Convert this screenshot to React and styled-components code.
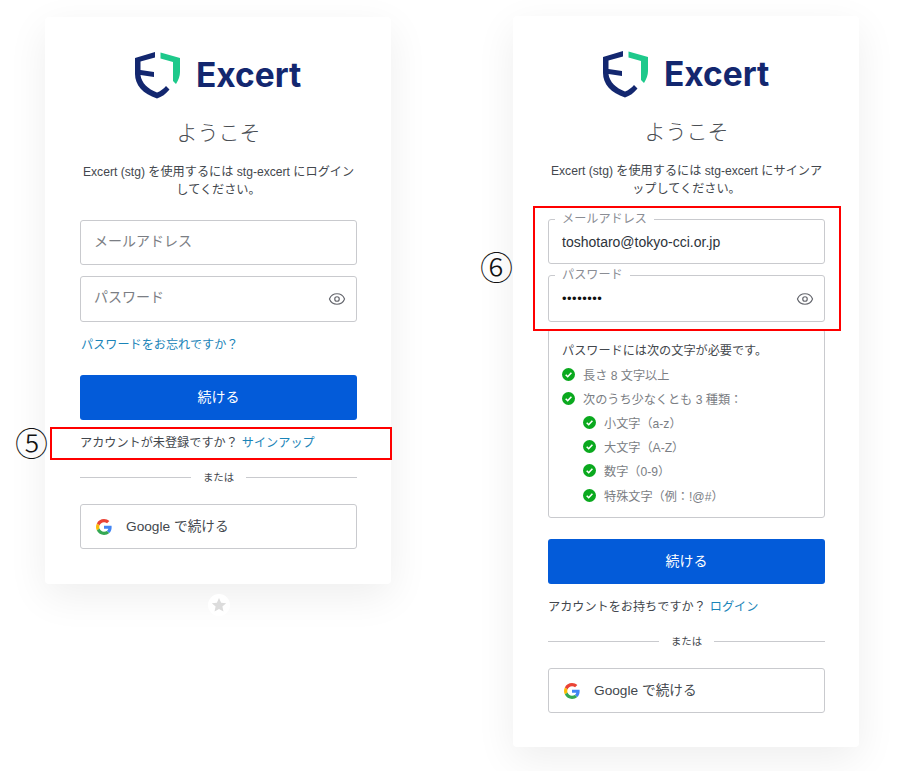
import React from 'react';
import styled, { createGlobalStyle } from 'styled-components';
import { Eye } from 'lucide-react';

const GlobalStyle = createGlobalStyle`
    html, body {
        margin: 0;
        padding: 0;
        background: #fff;
    }

    * {
        box-sizing: border-box;
    }

    body {
        font-family: "Liberation Sans", "Noto Sans CJK JP", sans-serif;
        color: #43474d;
    }
`;

const Page = styled.div`
    width: 903px;
    height: 771px;
    overflow: hidden;
    display: flex;
    align-items: flex-start;
    gap: 122px;
    padding: 16px 0 0 45px;
`;

const Card = styled.section`
    position: relative;
    width: 346px;
    margin-top: ${(p) => p.$offset || 0}px;
    padding: 35px 34px ${(p) => p.$bottom}px 35px;
    background: #fff;
    border-radius: 4px;
    box-shadow: 0 12px 40px rgba(0, 0, 0, 0.07);
`;

const Brand = styled.div`
    display: flex;
    align-items: center;
    height: 46px;
    margin-left: 55px;
    gap: 15px;
`;

const BrandName = styled.span`
    font-family: Inter, "Liberation Sans", sans-serif;
    font-size: 33.5px;
    font-weight: 700;
    line-height: 46px;
    color: #13276f;
`;

const Title = styled.h1`
    margin: ${(p) => p.$top}px 0 0;
    font-size: 21px;
    font-weight: 300;
    line-height: 30px;
    text-align: center;
    color: #4a4e54;
`;

const Intro = styled.p`
    margin: 15px 0 0;
    font-size: 12.15px;
    line-height: 18px;
    text-align: center;
`;

const Field = styled.div`
    position: relative;
    display: flex;
    align-items: center;
    height: ${(p) => p.$height}px;
    margin-top: ${(p) => p.$top}px;
    padding: 0 13px;
    border: 1px solid #c9cace;
    border-radius: 3px;
    font-size: 14px;
    color: #2d333a;
`;

const Placeholder = styled.span`
    margin-top: -6px;
    color: #7b7e84;
`;

const FloatLabel = styled.span`
    position: absolute;
    top: -8px;
    left: 6px;
    padding: 0 7px;
    background: #fff;
    font-size: 12.15px;
    line-height: 14px;
    color: #8a8d94;
`;

const Dots = styled.span`
    font-size: 13px;
    letter-spacing: 0.5px;
    margin-top: -1px;
    color: #111;
`;

const EyeButton = styled.span`
    display: flex;
    margin-left: auto;
    margin-right: -3px;
    color: #65676e;
`;

const TextLink = styled.a`
    color: #1a84b8;
    text-decoration: none;
`;

const ForgotRow = styled.div`
    margin-top: 15px;
    font-size: 12.15px;
    line-height: 16px;
    padding-left: 1px;
`;

const PrimaryButton = styled.button`
    display: block;
    width: 100%;
    height: 45px;
    margin-top: ${(p) => p.$top}px;
    padding: 0 0 3px;
    border: none;
    border-radius: 3px;
    background: #035bd9;
    color: #fff;
    font-family: inherit;
    font-size: 14px;
`;

const AccountRow = styled.p`
    position: relative;
    margin: 15px 0 0;
    font-size: 12.15px;
    line-height: 16px;
    white-space: nowrap;

    a {
        margin-left: 4px;
    }
`;

const RedBox = styled.div`
    position: absolute;
    top: ${(p) => p.$top}px;
    left: ${(p) => p.$left}px;
    width: ${(p) => p.$width}px;
    height: ${(p) => p.$height}px;
    border: 2px solid #ff0000;
    pointer-events: none;
`;

const Marker = styled.span`
    position: absolute;
    top: ${(p) => p.$top}px;
    left: ${(p) => p.$left}px;
    font-family: "Noto Sans CJK JP", sans-serif;
    font-size: 33px;
    font-weight: 300;
    line-height: 36px;
    color: #111;
`;

const Divider = styled.div`
    display: flex;
    align-items: center;
    gap: 12px;
    margin-top: 18px;
    font-size: 10.4px;
    line-height: 16px;

    span {
        transform: translateY(1px);
    }

    &::before,
    &::after {
        content: '';
        flex: 1;
        height: 1px;
        background: #c9cace;
    }
`;

const GoogleButton = styled.button`
    display: flex;
    align-items: center;
    gap: 14px;
    width: 100%;
    height: 45px;
    margin-top: 19px;
    padding: 0 15px;
    background: #fff;
    border: 1px solid #c9cace;
    border-radius: 3px;
    font-family: inherit;
    font-size: 13.7px;
    color: #43474d;

    span {
        margin-top: -4px;
    }
`;

const Requirements = styled.div`
    height: 189px;
    margin-top: 7px;
    padding: 13px 13px 0;
    border: 1px solid #c9cace;
    border-radius: 3px;
`;

const ReqTitle = styled.div`
    font-size: 12.15px;
    line-height: 16px;
    margin-bottom: 3px;
`;

const ReqItem = styled.div`
    display: flex;
    align-items: center;
    gap: 8px;
    height: 24.2px;
    padding-left: ${(p) => (p.$nested ? 21 : 0)}px;
    font-size: 12.15px;
    color: #7b7e84;
`;

const Badge = styled.div`
    position: absolute;
    top: 577px;
    left: 163px;
    width: 22px;
    height: 22px;
    border-radius: 50%;
    background: #fff;
    display: flex;
    align-items: center;
    justify-content: center;
`;

const ShieldLogo = () => (
    <svg width="46" height="47" viewBox="5 4 46 47" aria-hidden="true">
        <path
            fill="#13276f"
            d="M5 10L25 4V9.5L10.5 13.5V22L24 24V29L10.5 27C11.5 35 18 41 27 44.5C30 43.5 34 40.5 36 38L39.5 41.5C36 46 31.5 49 27 50.5C13 46 5 37 5 26Z"
        />
        <path
            fill="#1ec98b"
            d="M30.5 4.5L50 10V24C50 28 48.5 32 46 36L43 33V14L30.5 10.500Z"
        />
    </svg>
);

const GoogleLogo = () => (
    <svg width="16" height="16" viewBox="0 0 48 48" aria-hidden="true">
        <path fill="#EA4335" d="M24 9.5c3.5 0 6.7 1.2 9.2 3.6l6.9-6.9C35.9 2.4 30.5 0 24 0 14.6 0 6.5 5.4 2.6 13.2l8 6.2C12.5 13.7 17.8 9.5 24 9.5z" />
        <path fill="#4285F4" d="M46.9 24.5c0-1.6-.1-3.100-.4-4.500H24v9h12.900c-.6 3-2.200 5.500-4.700 7.200l7.700 6c4.500-4.200 7-10.300 7-17.700z" />
        <path fill="#FBBC05" d="M10.600 28.600c-.5-1.500-.8-3-.8-4.600s.3-3.100.8-4.600l-8-6.200C.9 16.500 0 20.100 0 24s.9 7.500 2.600 10.800l8-6.200z" />
        <path fill="#34A853" d="M24 48c6.500 0 11.900-2.100 15.900-5.800l-7.700-6c-2.200 1.500-4.900 2.300-8.200 2.300-6.200 0-11.500-4.200-13.400-9.900l-8 6.200C6.500 42.600 14.600 48 24 48z" />
    </svg>
);

const CheckIcon = () => (
    <svg width="13" height="13" viewBox="0 0 13 13" aria-hidden="true">
        <circle cx="6.5" cy="6.5" r="6.5" fill="#0aa91e" />
        <path d="M3.7 6.7L5.7 8.7L9.4 4.7" fill="none" stroke="#fff" strokeWidth="1.6" />
    </svg>
);

const StarIcon = () => (
    <svg width="16" height="16" viewBox="0 0 24 24" aria-hidden="true">
        <path fill="#dcdcdc" d="M12 1.5l3.2 7 7.6.8-5.7 5.100 1.600 7.500L12 18.100l-6.700 3.800 1.600-7.500L1.200 9.300l7.600-.8z" />
    </svg>
);

const rules = [
    { text: '長さ 8 文字以上' },
    { text: '次のうち少なくとも 3 種類：' },
    { text: '小文字（a-z）', nested: true },
    { text: '大文字（A-Z）', nested: true },
    { text: '数字（0-9）', nested: true },
    { text: '特殊文字（例：!@#）', nested: true }
];

const GoogleBlock = () => (
    <>
        <Divider><span>または</span></Divider>
        <GoogleButton type="button">
            <GoogleLogo />
            <span>Google で続ける</span>
        </GoogleButton>
    </>
);

function App() {
    return (
        <Page>
            <GlobalStyle />

            <Card $offset={1} $bottom={35}>
                <Brand>
                    <ShieldLogo />
                    <BrandName>Excert</BrandName>
                </Brand>
                <Title $top={20}>ようこそ</Title>
                <Intro>Excert (stg) を使用するには stg-excert にログインしてください。</Intro>
                <Field $height={45} $top={21}><Placeholder>メールアドレス</Placeholder></Field>
                <Field $height={46} $top={11}>
                    <Placeholder>パスワード</Placeholder>
                    <EyeButton><Eye size={18} strokeWidth={1.6} /></EyeButton>
                </Field>
                <ForgotRow><TextLink>パスワードをお忘れですか？</TextLink></ForgotRow>
                <PrimaryButton type="button" $top={22}>続ける</PrimaryButton>
                <AccountRow>
                    アカウントが未登録ですか？<TextLink>サインアップ</TextLink>
                    <RedBox $top={-8} $left={-30} $width={342} $height={33} />
                    <Marker $top={-11} $left={-65}>⑤</Marker>
                </AccountRow>
                <GoogleBlock />
                <Badge><StarIcon /></Badge>
            </Card>

            <Card $bottom={34}>
                <Brand>
                    <ShieldLogo />
                    <BrandName>Excert</BrandName>
                </Brand>
                <Title $top={20}>ようこそ</Title>
                <Intro>Excert (stg) を使用するには stg-excert にサインアップしてください。</Intro>
                <Field $height={45} $top={21}>
                    <FloatLabel>メールアドレス</FloatLabel>
                    toshotaro@tokyo-cci.or.jp
                </Field>
                <Field $height={47} $top={11}>
                    <FloatLabel>パスワード</FloatLabel>
                    <Dots>••••••••</Dots>
                    <EyeButton><Eye size={18} strokeWidth={1.6} /></EyeButton>
                </Field>
                <Requirements>
                    <ReqTitle>パスワードには次の文字が必要です。</ReqTitle>
                    {rules.map((rule) => (
                        <ReqItem key={rule.text} $nested={rule.nested}>
                            <CheckIcon />
                            {rule.text}
                        </ReqItem>
                    ))}
                </Requirements>
                <PrimaryButton type="button" $top={21}>続ける</PrimaryButton>
                <AccountRow>
                    アカウントをお持ちですか？<TextLink>ログイン</TextLink>
                </AccountRow>
                <GoogleBlock />
                <RedBox $top={190} $left={20} $width={308} $height={125} />
                <Marker $top={232} $left={-33}>⑥</Marker>
            </Card>
        </Page>
    );
}

export default App;
